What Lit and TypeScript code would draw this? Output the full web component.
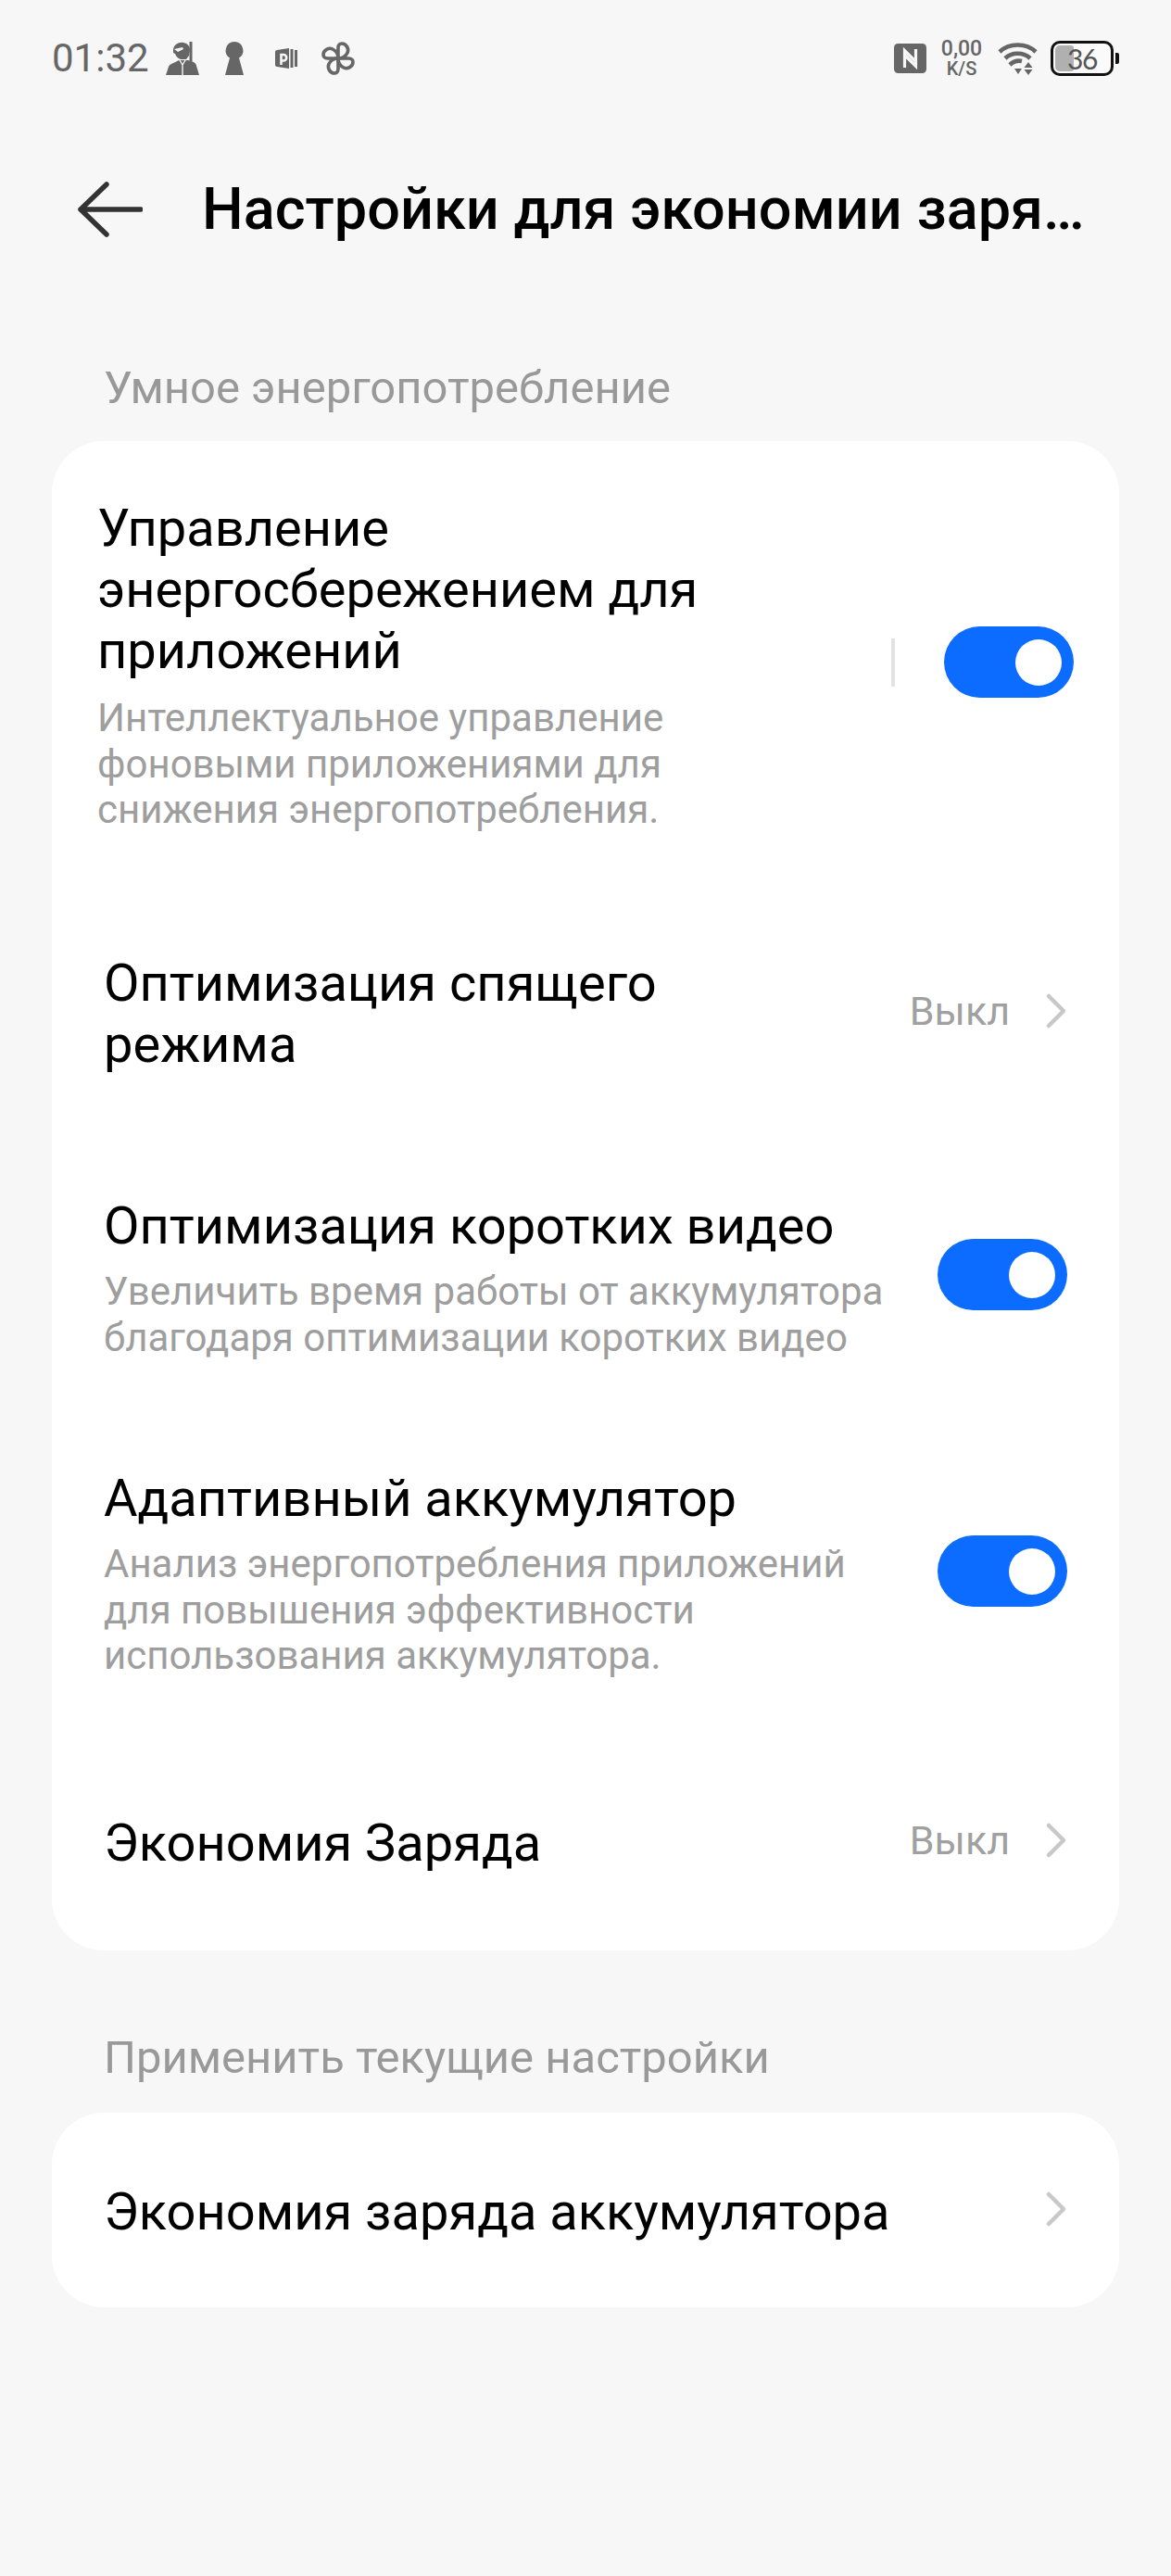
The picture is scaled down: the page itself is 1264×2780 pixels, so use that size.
import { LitElement, html, css } from "lit";
import { customElement } from "lit/decorators.js";

const toggle = html`<div class="toggle"><div class="knob"></div></div>`;
const chevron = html`<svg class="chev" viewBox="0 0 24 40" width="24" height="40"><path d="M4 4 L20 20 L4 36" fill="none" stroke="#c8c8c8" stroke-width="4.5" stroke-linecap="round" stroke-linejoin="round"/></svg>`;

@customElement("app-root")
export class AppRoot extends LitElement {
  static styles = css`
    :host { display: block; width: 1264px; height: 2780px; background: #f7f7f7; font-family: Roboto, "Liberation Sans", sans-serif; overflow: hidden; }
    .status { height: 126px; box-sizing: border-box; padding: 0 56px; display: flex; align-items: center; justify-content: space-between; }
    .sl, .sr { display: flex; align-items: center; }
    .time { font-size: 42px; color: #666; line-height: 50px; width: 123px; }
    .sl svg, .sr svg { display: block; fill: #666; }
    .sl .i2 { margin-left: 28px; } .sl .i3 { margin-left: 34px; } .sl .i4 { margin-left: 26px; }
    .speed { margin-left: 14px; width: 48px; color: #666; font-weight: 500; text-align: center; display: flex; flex-direction: column; }
    .speed span:first-child { font-size: 23px; line-height: 22px; }
    .speed span:last-child { font-size: 20px; line-height: 20px; }
    .wifi { margin-left: 15px; }
    .batt { margin-left: 14px; position: relative; width: 68px; height: 38px; box-sizing: border-box; border: 3px solid #111; border-radius: 10px; background: #fafafa; }
    .batt .fill { position: absolute; left: 2px; top: 2px; bottom: 2px; width: 20px; background: #b0b0b0; border-radius: 5px 3px 3px 5px; }
    .batt .num { position: absolute; left: 15px; top: 0; bottom: 0; display: flex; align-items: center; font-family: Lato, Roboto, sans-serif; font-size: 30px; letter-spacing: -1.5px; color: #555; }
    .nub { width: 4px; height: 12px; background: #111; margin-left: 2px; border-radius: 0 2px 2px 0; }
    .bar { height: 92px; padding-left: 84px; margin-top: 54px; display: flex; align-items: center; }
    .bar svg { display: block; }
    .title { margin-left: 64px; font-size: 63px; font-weight: 500; color: #000; white-space: nowrap; line-height: 92px; }
    .hdr { color: #999; font-size: 49px; line-height: 56px; padding-left: 112px; }
    .h1 { margin: 119px 0 29px; }
    .h2 { margin: 88px 0 31px; }
    .card { margin: 0 56px; background: #fff; border-radius: 56px; }
    .c1 { padding: 61px 0 83px; }
    .c2 { height: 210px; box-sizing: border-box; padding: 4px 56px 0; display: flex; align-items: center; justify-content: space-between; }
    .row { display: flex; align-items: center; justify-content: space-between; }
    .t { font-size: 56px; line-height: 66px; color: #000; }
    .s { font-size: 42px; line-height: 49.5px; color: #9e9e9e; margin-top: 13px; }
    .r1 { padding: 0 49px; }
    .r1 .text { width: 720px; }
    .r1 .s { margin-top: 15px; }
    .right { display: flex; align-items: center; margin-bottom: 6px; }
    .div { width: 4px; height: 52px; background: #e2e2e2; margin-right: 53px; }
    .toggle { width: 140px; height: 77px; border-radius: 39px; background: #0c6cff; display: flex; align-items: center; justify-content: flex-end; padding-right: 13px; box-sizing: border-box; flex: none; }
    .r3 > .toggle { margin-bottom: 7px; }
    .r4 > .toggle { margin-bottom: 4px; }
    .knob { width: 50px; height: 50px; border-radius: 50%; background: #fff; }
    .ri { padding: 0 56px; }
    .r2 { margin-top: 129.5px; }
    .r3 { margin-top: 130px; }
    .r4 { margin-top: 116px; }
    .r5 { margin-top: 144.5px; }
    .val { font-size: 43px; color: #a0a0a0; margin-right: 38px; }
    .chev { display: block; flex: none; }
    .end { display: flex; align-items: center; margin-bottom: 6px; }
    .r3 .text, .r4 .text { width: 900px; }
    .r2 .text { width: 700px; }
    .c2 .chev { margin-bottom: 6px; }
  `;

  render() {
    return html`
      <div class="status">
        <div class="sl">
          <div class="time">01:32</div>
          <svg width="36" height="36" viewBox="0 0 36 36">
            <path d="M8 8c1-5 6-8 11-7 5 1 7 4 7 8l-1 6-3 4h-6c-3-1-5-3-6-6l-2-1z"/>
            <path d="M9 8 18 6l1 2-6 3z" fill="#f7f7f7"/>
            <rect x="25.500" y="0" width="3" height="24"/>
            <path d="M0 36 3 27c1-3 6-4 11-7h10l6 2c2 1 3 3 3 4l3 10z"/>
            <path d="M15 20l3 5 3-5M18 25v11" fill="none" stroke="#f7f7f7" stroke-width="1.400"/>
          </svg>
          <svg class="i2" width="20" height="36" viewBox="0 0 20 36"><path d="M10 0a9.500 9.500 0 0 1 5 17.500L20 36H0L5 17.500A9.500 9.500 0 0 1 10 0z"/></svg>
          <svg class="i3" width="24" height="22" viewBox="0 0 24 22">
            <path d="M2 2 15 0v22L2 20c-1 0-2-1-2-2V4c0-1 1-2 2-2z"/>
            <path d="M6.500 18V7h2.500a3 3 0 0 1 0 6.500H6.500" fill="none" stroke="#f7f7f7" stroke-width="2.600"/>
            <rect x="16.500" y="1" width="3" height="20"/><rect x="21" y="2" width="3" height="18"/>
          </svg>
          <svg class="i4" width="36" height="36" viewBox="0 0 36 36"><g fill="none" stroke="#666" stroke-width="3.600" stroke-linejoin="round"><path d="M18 18V6.500C18 3.500 20 2 22 2c5 0 8 6 6 10-2 4-6 6-10 6z"/><path d="M18 18h11.500c3 0 4.500 2 4.500 4 0 5-6 8-10 6-4-2-6-6-6-10z"/><path d="M18 18v11.500c0 3-2 4.500-4 4.500-5 0-8-6-6-10 2-4 6-6 10-6z"/><path d="M18 18H6.500C3.500 18 2 16 2 14c0-5 6-8 10-6 4 2 6 6 6 10z"/></g></svg>
        </div>
        <div class="sr">
          <svg width="35" height="32" viewBox="0 0 35 32">
            <rect width="35" height="32" rx="4.500"/>
            <path d="M11.500 26V7.500L24 20M23.500 6V24.500L11 12" fill="none" stroke="#f7f7f7" stroke-width="3.200"/>
          </svg>
          <div class="speed"><span>0,00</span><span>K/S</span></div>
          <svg class="wifi" width="43" height="36" viewBox="0 0 43 36">
            <g fill="none" stroke="#666" stroke-width="4.600">
              <path d="M2 11C12 1 31 1 41 11"/>
              <path d="M8 18C15 11 28 11 35 18"/>
              <path d="M13 25C17 21 22 20 26 21"/>
            </g>
            <path d="M18 29h8l-4 6z"/><path d="M33 22l4.500 6h-9z" /><path d="M28.500 30h9l-4.500 6z"/>
          </svg>
          <div class="batt"><div class="fill"></div><div class="num">36</div></div>
          <div class="nub"></div>
        </div>
      </div>
      <div class="bar">
        <svg width="70" height="60" viewBox="0 0 70 60"><path d="M68 30H3M31 3 3 30l28 27" fill="none" stroke="#333" stroke-width="5.500" stroke-linecap="round" stroke-linejoin="round"/></svg>
        <div class="title">Настройки для экономии заря…</div>
      </div>
      <div class="hdr h1">Умное энергопотребление</div>
      <div class="card c1">
        <div class="row r1">
          <div class="text">
            <div class="t">Управление энергосбережением для приложений</div>
            <div class="s">Интеллектуальное управление фоновыми приложениями для снижения энергопотребления.</div>
          </div>
          <div class="right"><div class="div"></div>${toggle}</div>
        </div>
        <div class="row ri r2">
          <div class="text t">Оптимизация спящего режима</div>
          <div class="end"><span class="val">Выкл</span>${chevron}</div>
        </div>
        <div class="row ri r3">
          <div class="text">
            <div class="t">Оптимизация коротких видео</div>
            <div class="s">Увеличить время работы от аккумулятора благодаря оптимизации коротких видео</div>
          </div>
          ${toggle}
        </div>
        <div class="row ri r4">
          <div class="text">
            <div class="t">Адаптивный аккумулятор</div>
            <div class="s">Анализ энергопотребления приложений<br />для повышения эффективности<br />использования аккумулятора.</div>
          </div>
          ${toggle}
        </div>
        <div class="row ri r5">
          <div class="t">Экономия Заряда</div>
          <div class="end"><span class="val">Выкл</span>${chevron}</div>
        </div>
      </div>
      <div class="hdr h2">Применить текущие настройки</div>
      <div class="card c2">
        <div class="t">Экономия заряда аккумулятора</div>
        ${chevron}
      </div>
    `;
  }
}
